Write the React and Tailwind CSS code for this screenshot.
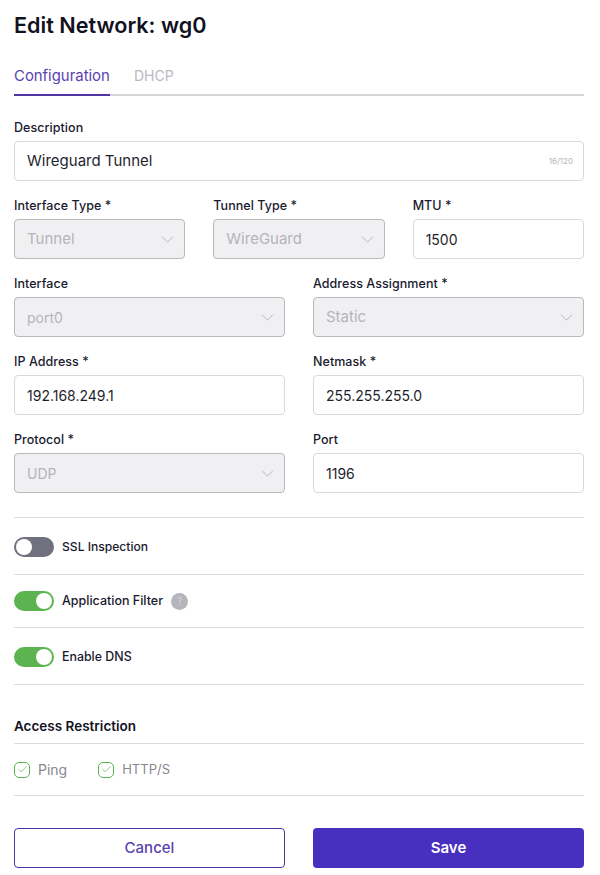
import React from 'react';
import { ChevronDown, Check } from 'lucide-react';

function Label({ children }) {
  return <label className="block h-5 mb-1 text-[12.5px] leading-[22px] font-medium tracking-[0.05px] text-[#1a1a2e]">{children}</label>;
}

function TextField({ label, value }) {
  return (
    <div>
      <Label>{label}</Label>
      <div className="h-10 px-3 flex items-center bg-white border border-[#d9d9dc] rounded text-[14px] text-[#1f1f2e]">{value}</div>
    </div>
  );
}

function SelectField({ label, value, textClass = 'text-[15px] pt-px' }) {
  return (
    <div>
      <Label>{label}</Label>
      <div className="h-10 pl-3 pr-1.5 flex items-center justify-between bg-[#f0f0f2] border border-[#b9b9bd] rounded text-[#b4b4ba]">
        <span className={textClass}>{value}</span>
        <ChevronDown size={21} strokeWidth={1} className="text-[#b0b0b6]" />
      </div>
    </div>
  );
}

function Toggle({ on }) {
  return (
    <span className={`w-10 h-5 p-0.5 flex rounded-full ${on ? 'bg-[#5bb450] justify-end' : 'bg-[#70707e] justify-start'}`}>
      <span className="w-4 h-4 rounded-full bg-white" />
    </span>
  );
}

function CheckItem({ label, textClass = 'text-[14px]' }) {
  return (
    <div className="flex items-center gap-2">
      <span className="w-4 h-4 flex items-center justify-center border border-[#5bb450] rounded-[5px]">
        <Check size={11} strokeWidth={1.5} className="text-[#5bb450]" />
      </span>
      <span className={`text-[#87878f] ${textClass}`}>{label}</span>
    </div>
  );
}

export default function App() {
  return (
    <div className="w-[600px] h-[875px] bg-white pl-3.5 pr-4 font-['Inter',sans-serif] overflow-hidden">
      <h1 className="pt-[11px] h-[39px] text-[21.6px] leading-7 font-semibold text-[#12121f]">Edit Network: wg0</h1>

      {/* Tabs */}
      <div className="mt-[25px] flex gap-6 border-b-2 border-[#d6d6d9] h-[32px]">
        <div className="h-[32px] w-[96px] border-b-2 border-[#4f35a8] text-[14.9px] leading-6 text-[#5a42b0] whitespace-nowrap">Configuration</div>
        <div className="text-[14px] leading-6 text-[#b9b9bf]">DHCP</div>
      </div>

      {/* Description */}
      <div className="mt-[21px]">
        <Label>Description</Label>
        <div className="h-10 pl-3 pr-2.5 flex items-center justify-between bg-white border border-[#d9d9dc] rounded text-[#1f1f2e]">
          <span className="text-[15px] pt-px">Wireguard Tunnel</span>
          <span className="text-[8px] text-[#b4b4ba]">16/120</span>
        </div>
      </div>

      <div className="mt-3.5 grid grid-cols-3 gap-x-7">
        <SelectField label="Interface Type *" value="Tunnel" />
        <SelectField label="Tunnel Type *" value="WireGuard" />
        <TextField label="MTU *" value="1500" />
      </div>

      <div className="mt-3.5 grid grid-cols-2 gap-x-7 gap-y-3.5">
        <SelectField label="Interface" value="port0" textClass="text-[14px]" />
        <SelectField label="Address Assignment *" value="Static" />
        <TextField label="IP Address *" value="192.168.249.1" />
        <TextField label="Netmask *" value="255.255.255.0" />
        <SelectField label="Protocol *" value="UDP" textClass="text-[14px]" />
        <TextField label="Port" value="1196" />
      </div>

      {/* Toggles */}
      <div className="mt-6 border-t border-[#dcdcdf]">
        <div className="h-[57px] flex items-center gap-2 border-b border-[#dcdcdf] pt-[2px]">
          <Toggle />
          <span className="text-[12.1px] font-medium text-[#1a1a2e]">SSL Inspection</span>
        </div>
        <div className="h-[53px] flex items-center gap-2 border-b border-[#dcdcdf]">
          <Toggle on />
          <span className="text-[12.5px] font-medium text-[#1a1a2e]">Application Filter</span>
          <span className="w-[17px] h-[17px] flex items-center justify-center rounded-full bg-[#b5b5bc] text-[10px] text-[#d2d2d7]">?</span>
        </div>
        <div className="h-[57px] flex items-center gap-2 border-b border-[#dcdcdf] pt-[2px]">
          <Toggle on />
          <span className="text-[12.4px] font-medium text-[#1a1a2e]">Enable DNS</span>
        </div>
      </div>

      {/* Access Restriction */}
      <h2 className="mt-[31px] h-[20px] text-[13.5px] leading-5 font-semibold text-[#12121f]">Access Restriction</h2>
      <div className="mt-[7px] h-[53px] flex items-center gap-[31px] border-y border-[#dcdcdf]">
        <CheckItem label="Ping" />
        <CheckItem label="HTTP/S" textClass="text-[13px]" />
      </div>

      <div className="mt-8 grid grid-cols-2 gap-x-7">
        <button className="h-10 pt-px rounded border border-[#4f35a8] bg-white text-[15px] font-medium text-[#5a42b0]">Cancel</button>
        <button className="h-10 pt-px rounded bg-[#472fc0] text-[15px] font-semibold text-white">Save</button>
      </div>
    </div>
  );
}
